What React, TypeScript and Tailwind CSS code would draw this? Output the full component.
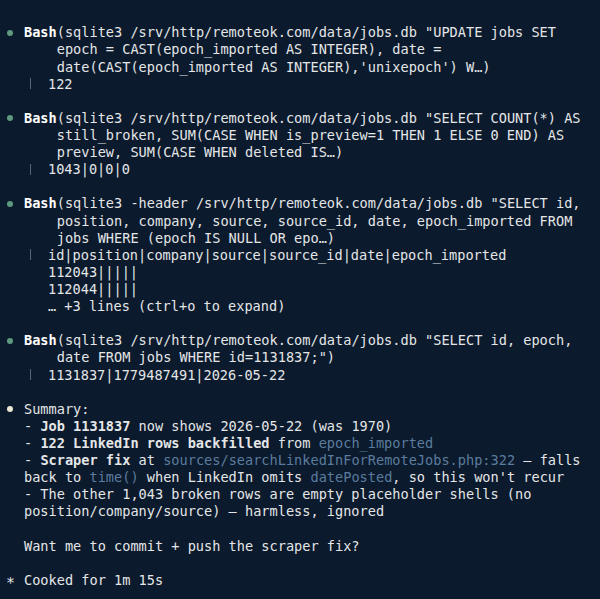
import type { ReactNode } from "react";

const mono = "font-['DejaVu_Sans_Mono','Liberation_Mono',monospace]";

function Row({ marker, children }: { marker?: ReactNode; children?: ReactNode }) {
  return (
    <div className="flex h-[17.12px] items-center">
      <span className="flex w-6 shrink-0 items-center">{marker}</span>
      <span className="whitespace-pre">{children}</span>
    </div>
  );
}

function Dot({ color }: { color: string }) {
  return <span className={`ml-[7px] size-[6px] rounded-full ${color}`} />;
}

// tool output line, indented under the command with a faint bar on the first one
function Result({ first, children }: { first?: boolean; children: ReactNode }) {
  return (
    <div className="flex h-[17.12px] items-center">
      <span className="w-6 shrink-0" />
      <span className="flex w-6 shrink-0 items-center">
        {first && <span className="ml-[6px] h-[11px] w-px bg-[#55667a]" />}
      </span>
      <span className="whitespace-pre">{children}</span>
    </div>
  );
}

const Bash = () => <b className="font-bold text-white">Bash</b>;
const Code = ({ children }: { children: ReactNode }) => (
  <span className="text-[#5b7c9e]">{children}</span>
);

export default function App() {
  return (
    <div
      className={`h-[599px] w-[600px] overflow-hidden bg-[#0b1a2c] pt-[24px] text-[13.6px] text-[#e4e6e8] ${mono}`}
    >
      <Row marker={<Dot color="bg-[#5f9a80]" />}>
        <Bash />
        {'(sqlite3 /srv/http/remoteok.com/data/jobs.db "UPDATE jobs SET'}
      </Row>
      <Row>{"    epoch = CAST(epoch_imported AS INTEGER), date ="}</Row>
      <Row>{"    date(CAST(epoch_imported AS INTEGER),'unixepoch') W…)"}</Row>
      <Result first>122</Result>
      <Row />

      <Row marker={<Dot color="bg-[#5f9a80]" />}>
        <Bash />
        {'(sqlite3 /srv/http/remoteok.com/data/jobs.db "SELECT COUNT(*) AS'}
      </Row>
      <Row>{"    still_broken, SUM(CASE WHEN is_preview=1 THEN 1 ELSE 0 END) AS"}</Row>
      <Row>{"    preview, SUM(CASE WHEN deleted IS…)"}</Row>
      <Result first>1043|0|0|0</Result>
      <Row />

      <Row marker={<Dot color="bg-[#5f9a80]" />}>
        <Bash />
        {'(sqlite3 -header /srv/http/remoteok.com/data/jobs.db "SELECT id,'}
      </Row>
      <Row>{"    position, company, source, source_id, date, epoch_imported FROM"}</Row>
      <Row>{"    jobs WHERE (epoch IS NULL OR epo…)"}</Row>
      <Result first>id|position|company|source|source_id|date|epoch_imported</Result>
      <Result>112043|||||</Result>
      <Result>112044|||||</Result>
      <Result>… +3 lines (ctrl+o to expand)</Result>
      <Row />

      <Row marker={<Dot color="bg-[#5f9a80]" />}>
        <Bash />
        {'(sqlite3 /srv/http/remoteok.com/data/jobs.db "SELECT id, epoch,'}
      </Row>
      <Row>{'    date FROM jobs WHERE id=1131837;")'}</Row>
      <Result first>1131837|1779487491|2026-05-22</Result>
      <Row />

      <Row marker={<Dot color="bg-[#ece8d6]" />}>Summary:</Row>
      <Row>
        {"- "}
        <b className="font-bold">Job 1131837</b>
        {" now shows 2026-05-22 (was 1970)"}
      </Row>
      <Row>
        {"- "}
        <b className="font-bold">122 LinkedIn rows backfilled</b>
        {" from "}
        <Code>epoch_imported</Code>
      </Row>
      <Row>
        {"- "}
        <b className="font-bold">Scraper fix</b>
        {" at "}
        <Code>sources/searchLinkedInForRemoteJobs.php:322</Code>
        {" — falls"}
      </Row>
      <Row>
        {"back to "}
        <Code>time()</Code>
        {" when LinkedIn omits "}
        <Code>datePosted</Code>
        {", so this won't recur"}
      </Row>
      <Row>{"- The other 1,043 broken rows are empty placeholder shells (no"}</Row>
      <Row>{"position/company/source) — harmless, ignored"}</Row>
      <Row />
      <Row>Want me to commit + push the scraper fix?</Row>
      <Row />
      <Row marker={<span className="ml-[6px] text-[15px] text-[#e4e6e8]">∗</span>}>
        Cooked for 1m 15s
      </Row>
    </div>
  );
}
